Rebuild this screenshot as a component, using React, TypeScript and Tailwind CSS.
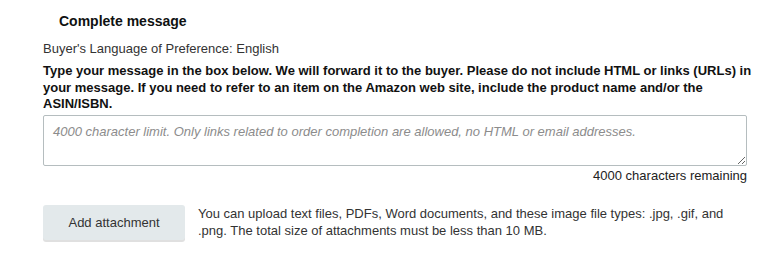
import React, { useState } from "react";

export default function App() {
  const [text, setText] = useState("");
  const remaining = 4000 - text.length;

  return (
    <div className="w-[776px] h-[279px] bg-white font-['Liberation_Sans',Arial,sans-serif] text-[#111]">
      <div className="pl-[43px] pr-[20px] pt-[13px]">
        <h3 className="pl-[16px] text-[14px] leading-[16px] font-bold text-[#0f1111]">Complete message</h3>

        <p className="mt-[12px] text-[13px] leading-[15px] text-[#333]">Buyer's Language of Preference: English</p>

        <p className="mt-[7px] w-[712px] text-[13px] leading-[16.7px] font-bold text-[#111]">
          Type your message in the box below. We will forward it to the buyer. Please do not include HTML or links (URLs) in
          your message. If you need to refer to an item on the Amazon web site, include the product name and/or the
          ASIN/ISBN.
        </p>

        <textarea
          value={text}
          onChange={(e) => setText(e.target.value)}
          maxLength={4000}
          placeholder="4000 character limit. Only links related to order completion are allowed, no HTML or email addresses."
          className="mt-[2px] block w-[704px] h-[51px] border border-[#b5bdbf] rounded-[2px] px-[9px] pt-[8px] pb-[4px] text-[13px] leading-[15px] placeholder:italic placeholder:text-[#8c8c8c] outline-none resize-y"
        />

        <div className="w-[704px] text-right text-[13px] leading-[15px] text-[#222] mt-[2px]">
          {remaining} characters remaining
        </div>

        {/* attachment row */}
        <div className="flex items-start mt-[22px]">
          <button className="w-[142px] h-[35px] bg-[#e3e9eb] rounded-[3px] text-[13px] text-[#333] shadow-[0_2px_0_rgba(0,0,0,0.12)] shrink-0">
            Add attachment
          </button>
          <p className="ml-[13px] w-[530px] text-[13px] leading-[17px] text-[#333]">
            You can upload text files, PDFs, Word documents, and these image file types: .jpg, .gif, and .png. The total
            size of attachments must be less than 10 MB.
          </p>
        </div>
      </div>
    </div>
  );
}
